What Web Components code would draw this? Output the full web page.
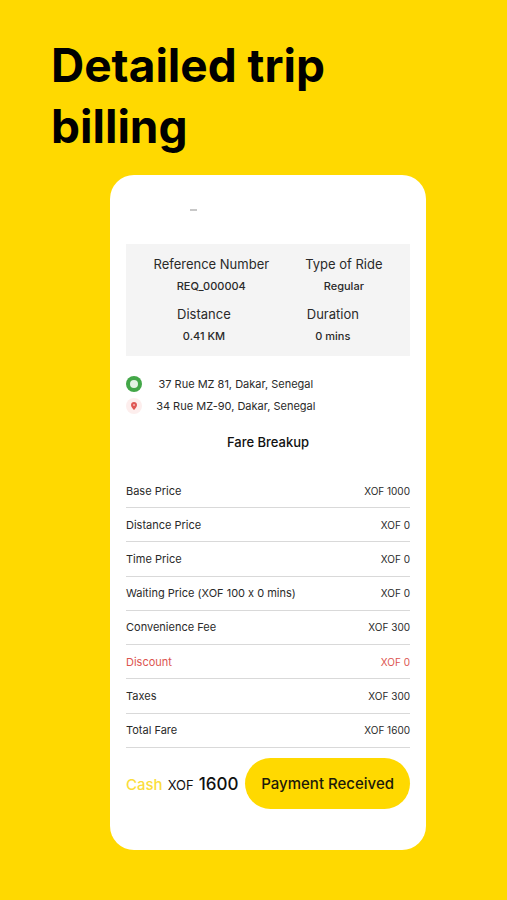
<!DOCTYPE html>
<html lang="en">
<head>
<meta charset="utf-8">
<meta name="viewport" content="width=device-width, initial-scale=1">
<title>Detailed trip billing</title>
<style>
  body {
    margin: 0;
    min-height: 100vh;
    background: #ffd900;
    color: #2a2a2a;
    font-family: Inter, "Open Sans", sans-serif;
    font-feature-settings: "calt" 0;
  }
</style>
</head>
<body>
<trip-billing>
  <span slot="title">Detailed trip billing</span>
  <trip-summary>
    <trip-stat slot="first" label="Reference Number">REQ_000004</trip-stat>
    <trip-stat slot="first" label="Type of Ride">Regular</trip-stat>
    <trip-stat slot="second" label="Distance">0.41 KM</trip-stat>
    <trip-stat slot="second" label="Duration">0 mins</trip-stat>
  </trip-summary>
  <trip-route>
    <span slot="pickup">37 Rue MZ 81, Dakar, Senegal</span>
    <span slot="drop">34 Rue MZ-90, Dakar, Senegal</span>
  </trip-route>
  <fare-table></fare-table>
  <payment-bar method="Cash" currency="XOF" amount="1600">Payment Received</payment-bar>
</trip-billing>

<script>
/**
 * Creates a template element from markup.
 *
 * @param {string} html - The markup of the template.
 * @returns {HTMLTemplateElement} - The template.
 */
const createTemplate = (html) => {
  const template = document.createElement('template')
  template.innerHTML = html
  return template
}

/**
 * Base class that clones a template into an open shadow root.
 */
class TemplateElement extends HTMLElement {
  /**
   * Creates an instance of the current type.
   */
  constructor () {
    super()
    this.attachShadow({ mode: 'open' }).append(
      this.constructor.template.content.cloneNode(true)
    )
  }
}

customElements.define(
  'trip-billing',
  /**
   * Represents the page: a heading and the receipt card.
   */
  class extends TemplateElement {
    static template = createTemplate(`
<style>
  :host {
    display: block;
    padding: 35px 81px 50px 51px;
  }
  h1 {
    max-width: 300px;
    margin: 0;
    color: #000;
    font-size: 46px;
    font-weight: 700;
    line-height: 61px;
  }
  main {
    margin: 18px 0 0 59px;
    padding: 0 16px 41px;
    border-radius: 24px;
    background: #fff;
  }
  header {
    height: 35px;
    padding: 34px 0 0 64px;
  }
  .handle {
    display: block;
    width: 7px;
    height: 2px;
    background: #c8c8c8;
  }
</style>
<h1><slot name="title"></slot></h1>
<main>
  <header><span class="handle"></span></header>
  <slot></slot>
</main>
`)
  }
)

customElements.define(
  'trip-summary',
  /**
   * Represents the grey panel with two rows of trip facts.
   */
  class extends TemplateElement {
    static template = createTemplate(`
<style>
  :host {
    display: block;
    padding: 9px 0;
    background: #f4f4f4;
  }
  div {
    display: flex;
    justify-content: center;
    gap: 36px;
  }
  div + div {
    gap: 76px;
    margin-top: 6px;
  }
</style>
<div><slot name="first"></slot></div>
<div><slot name="second"></slot></div>
`)
  }
)

customElements.define(
  'trip-stat',
  /**
   * Represents a label with its value below.
   */
  class extends TemplateElement {
    static template = createTemplate(`
<style>
  :host {
    display: block;
    text-align: center;
    white-space: nowrap;
  }
  .label {
    font-size: 13px;
    line-height: 22px;
  }
  .value {
    font-size: 11px;
    font-weight: 500;
    line-height: 22px;
  }
</style>
<div class="label"></div>
<div class="value"><slot></slot></div>
`)

    /**
     * Called when the element is inserted into the document.
     */
    connectedCallback () {
      this.shadowRoot.querySelector('.label').textContent = this.getAttribute('label')
    }
  }
)

customElements.define(
  'trip-route',
  /**
   * Represents the pickup and drop addresses.
   */
  class extends TemplateElement {
    static template = createTemplate(`
<style>
  :host {
    display: block;
    padding-top: 17px;
    font-size: 11px;
    line-height: 22px;
    text-align: center;
    white-space: nowrap;
  }
  div {
    display: grid;
    grid-template-columns: 16px 7fr 3fr;
    align-items: center;
  }
  svg {
    display: block;
  }
</style>
<div>
  <svg width="16" height="16" viewBox="0 0 16 16" aria-hidden="true">
    <circle cx="8" cy="8" r="8" fill="#43a748"/>
    <circle cx="8" cy="8" r="4" fill="#e3f3e3"/>
  </svg>
  <slot name="pickup"></slot>
</div>
<div>
  <svg width="16" height="16" viewBox="0 0 16 16" aria-hidden="true">
    <circle cx="8" cy="8" r="8" fill="#fdeeed"/>
    <path d="M8 4C6.200 4 5 5.300 5 6.900C5 9 8 12 8 12S11 9 11 6.900C11 5.300 9.800 4 8 4Z" fill="#df5653"/>
    <circle cx="8" cy="7" r="1.100" fill="#f3b1ae"/>
  </svg>
  <slot name="drop"></slot>
</div>
`)
  }
)

customElements.define(
  'fare-table',
  /**
   * Represents the fare breakup.
   */
  class extends TemplateElement {
    static template = createTemplate(`
<style>
  :host {
    display: block;
    padding-top: 14px;
  }
  h2 {
    margin: 0 0 21px;
    color: #111;
    font-size: 13px;
    font-weight: 500;
    line-height: 22px;
    text-align: center;
  }
  table {
    width: 100%;
    height: 274px;
    border-collapse: collapse;
    line-height: 22px;
    white-space: nowrap;
  }
  th,
  td {
    padding: 0;
    border-bottom: 1px solid #d9d9d9;
    font-weight: 400;
  }
  th {
    font-size: 11px;
    text-align: left;
  }
  td {
    font-size: 10px;
    text-align: right;
  }
  .discount {
    color: #dc5550;
  }
</style>
<h2>Fare Breakup</h2>
<table><tbody></tbody></table>
`)

    #fares = [
      ['Base Price', 1000],
      ['Distance Price', 0],
      ['Time Price', 0],
      ['Waiting Price (XOF 100 x 0 mins)', 0],
      ['Convenience Fee', 300],
      ['Discount', 0],
      ['Taxes', 300],
      ['Total Fare', 1600]
    ]

    /**
     * Called when the element is inserted into the document.
     */
    connectedCallback () {
      this.shadowRoot.querySelector('tbody').replaceChildren(
        ...this.#fares.map(this.#createRow)
      )
    }

    /**
     * Creates a table row for a fare.
     *
     * @param {Array} fare - The name and the amount.
     * @returns {HTMLTableRowElement} - The row.
     */
    #createRow ([name, amount]) {
      const row = document.createElement('tr')
      const head = document.createElement('th')
      head.scope = 'row'
      head.textContent = name
      row.append(head)
      row.insertCell().textContent = `XOF ${amount}`
      row.classList.toggle('discount', name === 'Discount')
      return row
    }
  }
)

customElements.define(
  'payment-bar',
  /**
   * Represents the amount to pay and the confirm button.
   */
  class extends TemplateElement {
    static template = createTemplate(`
<style>
  :host {
    display: flex;
    align-items: center;
    justify-content: space-between;
    padding-top: 10px;
    white-space: nowrap;
  }
  p {
    display: flex;
    align-items: baseline;
    gap: 5px;
    margin: 0;
    color: #111;
    font-size: 13px;
  }
  .method {
    color: #fbdd3c;
    font-size: 15px;
    font-weight: 500;
  }
  .amount {
    font-size: 17px;
    font-weight: 500;
  }
  button {
    height: 51px;
    padding: 0 16px;
    border: 0;
    border-radius: 26px;
    background: #ffd900;
    color: #1c1a0a;
    font-family: inherit;
    font-size: 15px;
    font-weight: 500;
  }
</style>
<p>
  <span class="method"></span>
  <span class="currency"></span>
  <span class="amount"></span>
</p>
<button type="button"><slot></slot></button>
`)

    /**
     * Called when the element is inserted into the document.
     */
    connectedCallback () {
      for (const name of ['method', 'currency', 'amount']) {
        this.shadowRoot.querySelector(`.${name}`).textContent = this.getAttribute(name)
      }
    }
  }
)
</script>
</body>
</html>
